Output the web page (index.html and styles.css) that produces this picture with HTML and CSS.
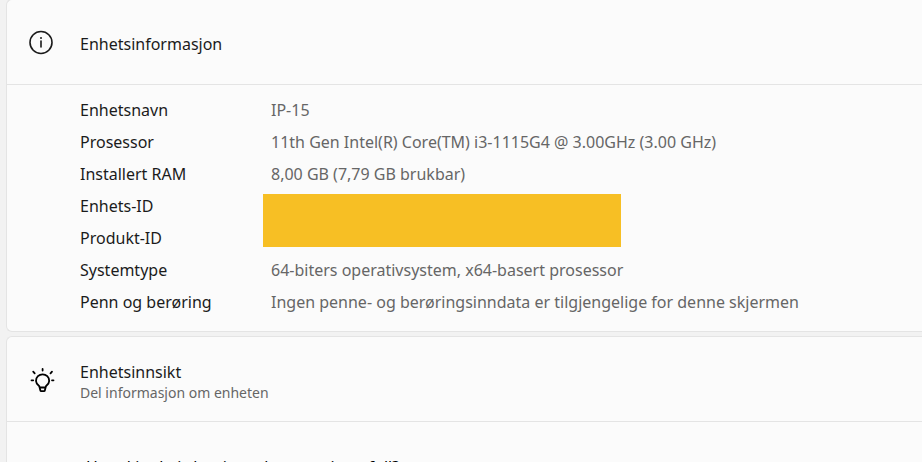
FILE: index.html
```html
<!DOCTYPE html>
<html lang="nb">
<head>
  <meta charset="UTF-8">
  <meta name="viewport" content="width=device-width, initial-scale=1.0">
  <title>Enhetsinformasjon</title>
  <link rel="stylesheet" href="styles.css">
</head>
<body>
  <main>
    <section class="card">
      <header class="card-header">
        <svg class="icon" viewBox="0 0 26 26" aria-hidden="true">
          <circle cx="13" cy="13.500" r="11" />
          <path d="M13 12v6" />
          <circle class="dot" cx="13" cy="9" r="1" />
        </svg>
        <h2>Enhetsinformasjon</h2>
      </header>
      <div class="specs">
        <table>
          <tbody>
            <tr><th scope="row">Enhetsnavn</th><td>IP-15</td></tr>
            <tr><th scope="row">Prosessor</th><td>11th Gen Intel(R) Core(TM) i3-1115G4 @ 3.00GHz (3.00 GHz)</td></tr>
            <tr><th scope="row">Installert RAM</th><td>8,00 GB (7,79 GB brukbar)</td></tr>
            <tr><th scope="row">Enhets-ID</th><td class="hidden-ids" rowspan="2"><div class="redacted"></div></td></tr>
            <tr><th scope="row">Produkt-ID</th></tr>
            <tr><th scope="row">Systemtype</th><td>64-biters operativsystem, x64-basert prosessor</td></tr>
            <tr><th scope="row">Penn og berøring</th><td>Ingen penne- og berøringsinndata er tilgjengelige for denne skjermen</td></tr>
          </tbody>
        </table>
      </div>
    </section>

    <section class="card">
      <header class="card-header">
        <svg class="icon bulb" viewBox="0 0 26 26" aria-hidden="true">
          <path d="M12.300 24.300l-1-4C9.500 18.800 8 17.400 8 14.900a6.600 6.600 0 0 1 13.200 0c0 2.500-1.500 3.900-3.300 5.400l-1 4c-.1.600-.5.900-1 .9h-2.600c-.5 0-.9-.3-1-.9zM11.600 21.500h6" />
          <path d="M14.600 3v1.500M5.200 5.700l1.500 1.700M24 5.700l-1.500 1.700M3.500 14.300h1.700M24 14.300h1.500" />
        </svg>
        <div>
          <h2>Enhetsinnsikt</h2>
          <p>Del informasjon om enheten</p>
        </div>
      </header>
      <div class="questions">
        <h3>Hva skjer hvis lagringsplassen min er full?</h3>
      </div>
    </section>
  </main>
</body>
</html>
```

FILE: styles.css
```css
* { box-sizing: border-box; }
body { margin: 0; background-color: #f2f2f2; color: #1b1b1b; font-family: "Noto Sans", "Open Sans", sans-serif; font-size: 16px; line-height: 24px; overflow: hidden; }
main { display: flex; flex-direction: column; gap: 4px; margin-top: -1px; padding-left: 6px; }
h2, h3, p { margin: 0; font-weight: 400; }
h2 { font-size: 16px; line-height: 24px; }
.card { background-color: #fbfbfb; border: 1px solid #e4e4e4; border-right: none; border-radius: 6px 0 0 6px; }
.card-header { display: flex; align-items: center; gap: 26px; min-height: 85px; padding-left: 21px; border-bottom: 1px solid #e4e4e4; }
.card-header > h2 { padding-top: 4px; }
.card-header > div { padding-top: 4px; }
.card-header p { color: #666; font-size: 14px; line-height: 18px; }
.icon { width: 26px; height: 26px; overflow: visible; fill: none; stroke: #1b1b1b; stroke-width: 1.6; stroke-linecap: round; stroke-linejoin: round; }
.icon .dot { fill: #1b1b1b; stroke: none; }
.icon.bulb { stroke: #000; stroke-width: 1.8; }
.specs { padding: 9px 16px 13px 73px; }
table { border-collapse: collapse; }
th, td { height: 32px; padding: 0; text-align: left; font-weight: 400; white-space: nowrap; }
th { width: 191px; color: #1b1b1b; }
td { color: #666; }
.hidden-ids { padding-top: 4px; vertical-align: top; }
.redacted { width: 358px; height: 53px; margin-left: -8px; background-color: #f7bf24; }
.questions { padding: 33px 16px 32px 79px; }
.questions h3 { font-size: 16px; line-height: 24px; color: #000; }
```
